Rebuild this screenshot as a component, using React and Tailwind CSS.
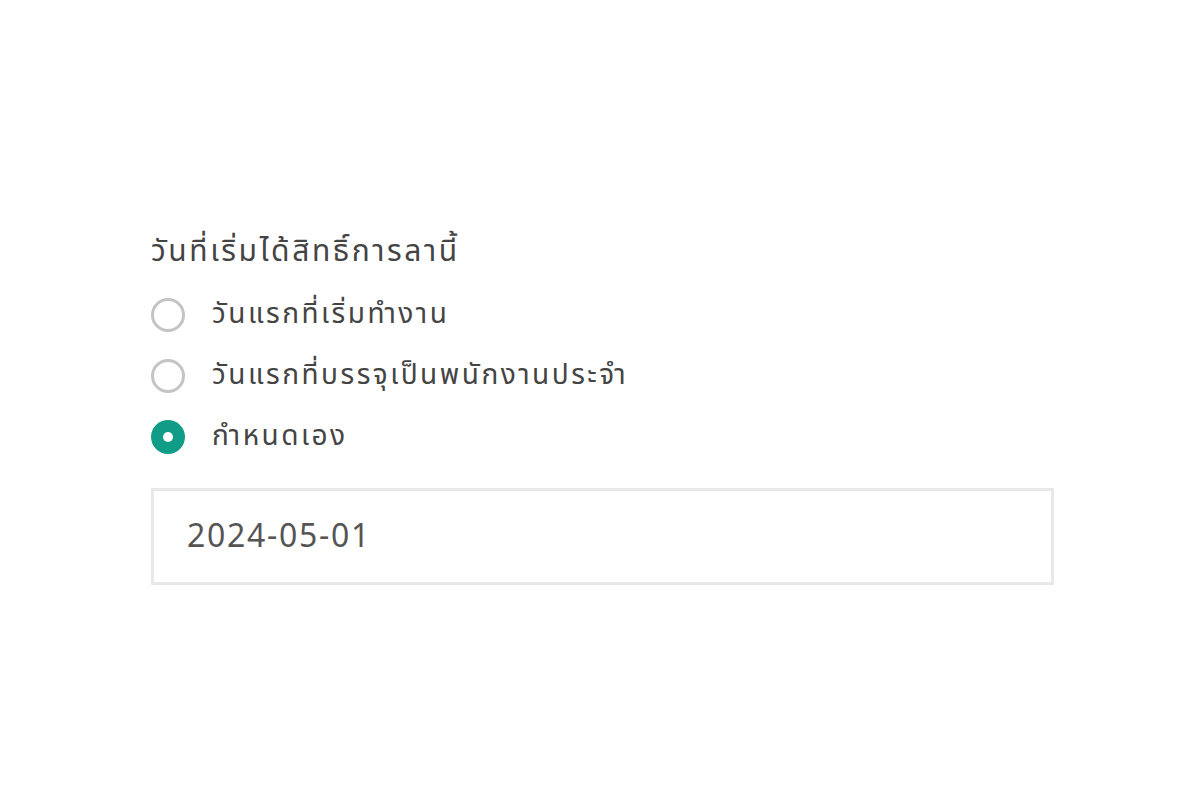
import React, { useState } from "react";

const options = [
  { id: "start", label: "วันแรกที่เริ่มทำงาน" },
  { id: "permanent", label: "วันแรกที่บรรจุเป็นพนักงานประจำ" },
  { id: "custom", label: "กำหนดเอง" },
];

function Radio({ checked }) {
  if (checked) {
    return (
      <span className="flex h-[34px] w-[34px] shrink-0 items-center justify-center rounded-full bg-[#109c86]">
        <span className="h-[10px] w-[10px] rounded-full bg-white" />
      </span>
    );
  }
  return (
    <span className="h-[34px] w-[34px] shrink-0 rounded-full border-[3px] border-[#c4c4c4] bg-white" />
  );
}

function App() {
  const [selected, setSelected] = useState("custom");
  const [date, setDate] = useState("2024-05-01");

  return (
    <div
      className="min-h-[800px] w-full bg-white pl-[151px] pt-[230px]"
      style={{ fontFamily: '"Noto Sans Thai", "Noto Sans", "Liberation Sans", sans-serif' }}
    >
      <div className="w-[902px]">
        <h2 className="text-[30px] leading-[44px] tracking-[2.6px] text-[#444]">
          วันที่เริ่มได้สิทธิ์การลานี้
        </h2>
        <div className="mt-[22px] flex flex-col gap-[23px]">
          {options.map((opt) => (
            <label
              key={opt.id}
              className="flex h-[38px] cursor-pointer items-center gap-[27px]"
              onClick={() => setSelected(opt.id)}
            >
              <Radio checked={selected === opt.id} />
              <span className="text-[28px] tracking-[2.5px] text-[#444]">{opt.label}</span>
            </label>
          ))}
        </div>
        {selected === "custom" && (
          <input
            value={date}
            onChange={(e) => setDate(e.target.value)}
            className="mt-[32px] h-[97px] w-[903px] border-[3px] border-[#e8e8e8] px-[33px] text-[32px] tracking-[1.7px] text-[#555] outline-none"
          />
        )}
      </div>
    </div>
  );
}

export default App;
